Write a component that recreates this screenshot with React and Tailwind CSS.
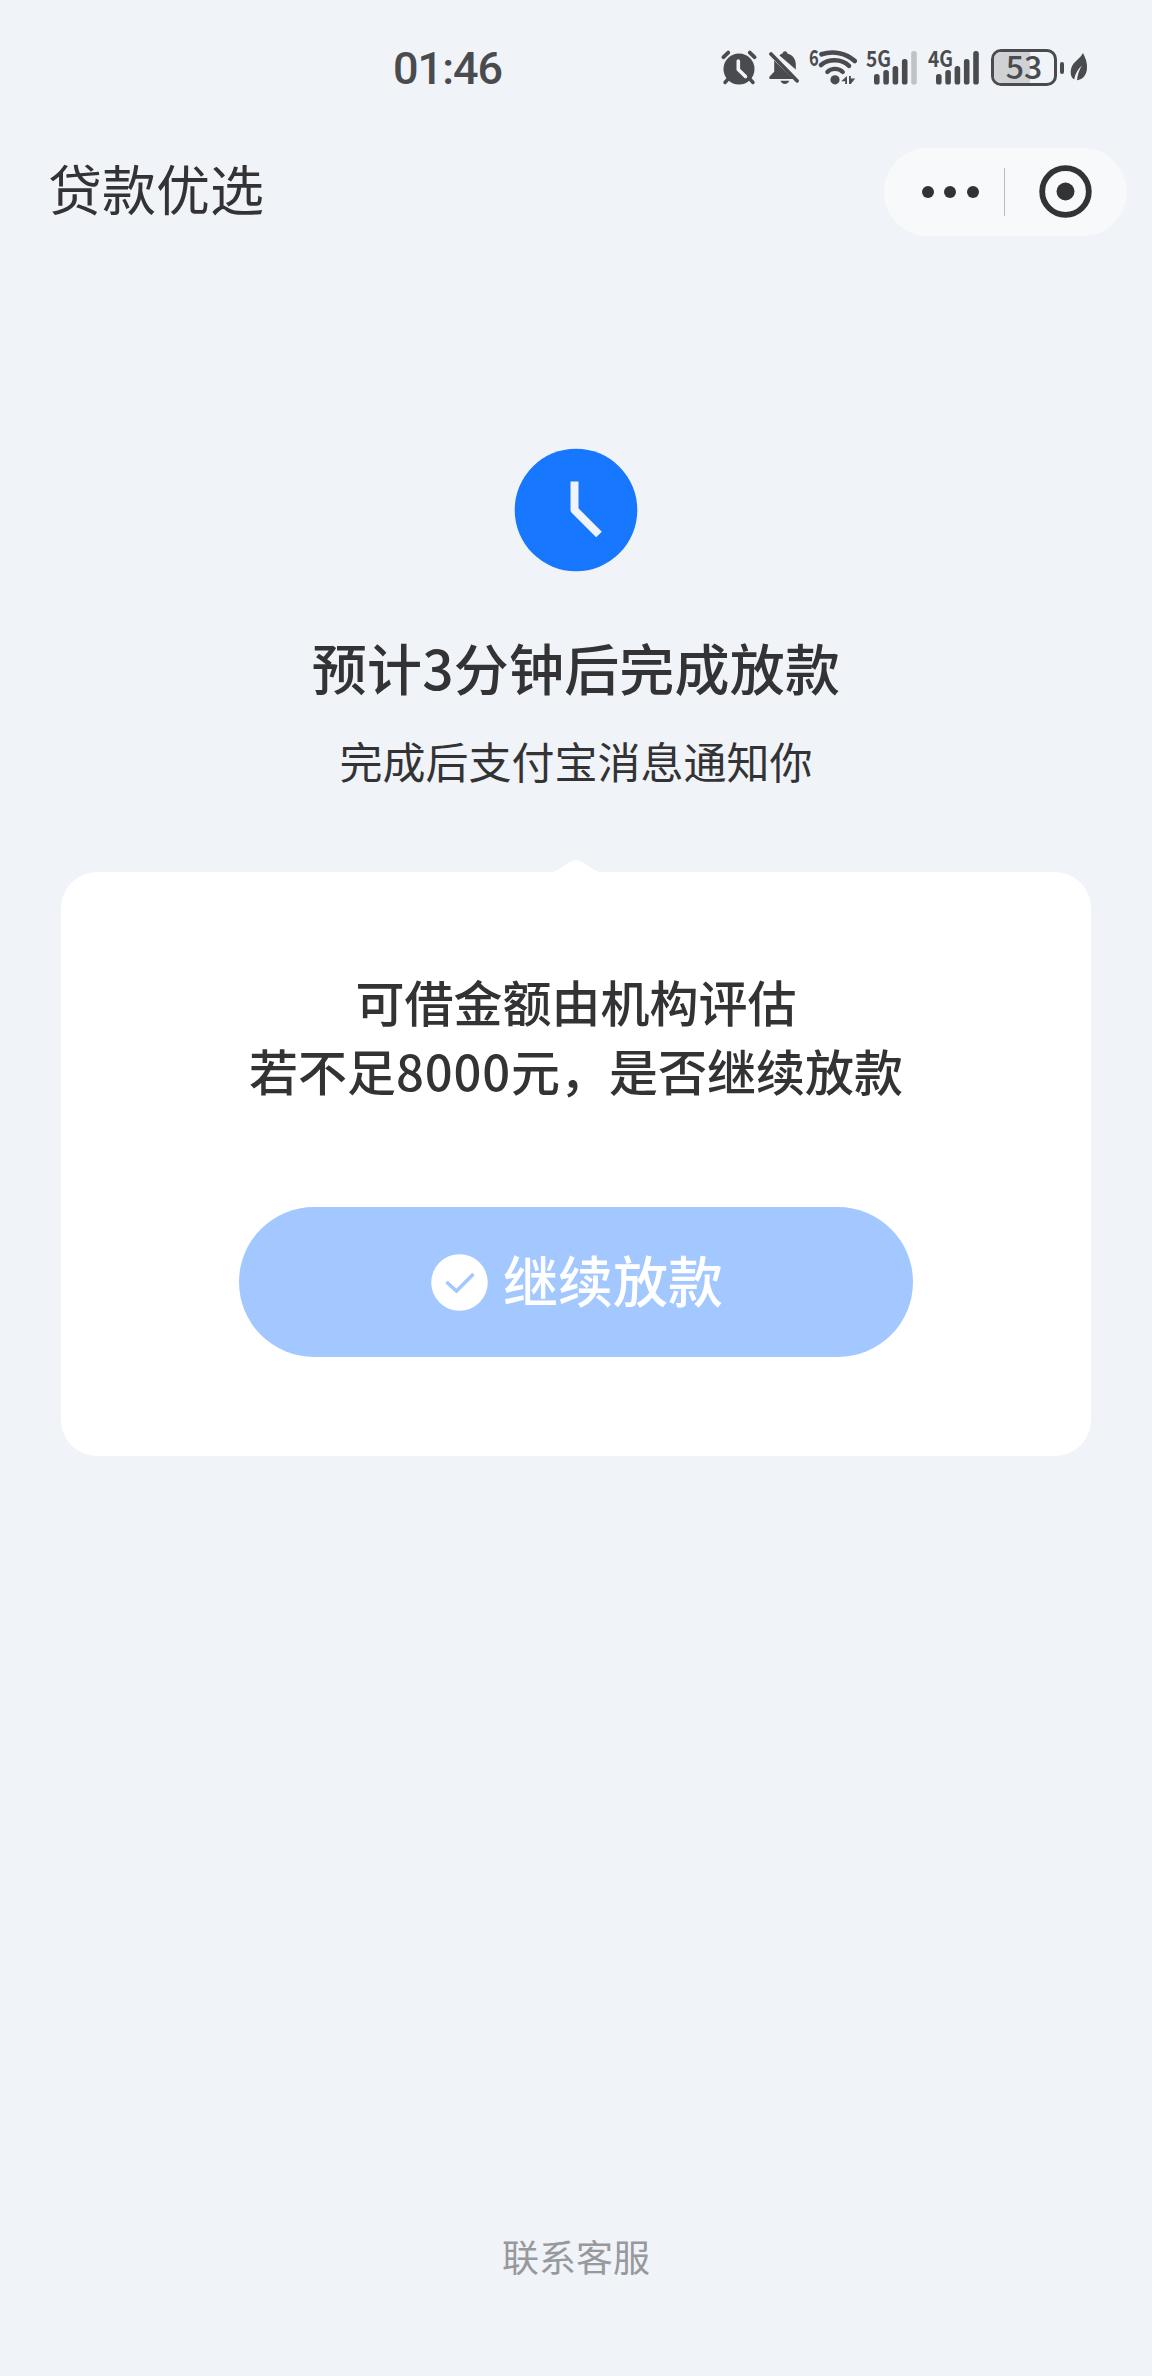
const SIGNAL_BARS = [
  { x: 0, y: 74 },
  { x: 9.3, y: 70 },
  { x: 18.6, y: 66 },
  { x: 27.9, y: 59 },
  { x: 37.2, y: 51 },
];

function AlarmIcon() {
  return (
    <svg className="w-9 h-[130px]" viewBox="721 0 36 130" fill="none" stroke="#4a4b4e" strokeLinecap="round">
      <circle cx="739" cy="69" r="15.5" fill="#4a4b4e" stroke="none" />
      <path d="M723.5 57.2 L728.2 52.6 M754.5 57.2 L749.8 52.6" strokeWidth="3.8" />
      <path d="M729 78 L725 82.5 M749 78 L753 82.5" strokeWidth="3.4" />
      <path d="M738.3 61 V69.5 L745.5 76.5" stroke="#f0f3f8" strokeWidth="3.6" strokeLinejoin="round" />
    </svg>
  );
}

function MutedBellIcon() {
  return (
    <svg className="w-[31px] h-[130px]" viewBox="769 0 31 130" fill="#4a4b4e">
      <path d="M779.5 55.4 C780.8 54.3 781.6 53.9 782.6 53.6 C783 50.4 787 50.4 787.4 53.6 C792.6 55 795.8 59 795.8 64.6 V69.5 Z" />
      <path d="M774.2 60.5 L793.4 79 H770.6 C769 79 768.8 77.2 769.8 76.2 L774.2 71.8 Z" />
      <path d="M780.5 80.8 H789.2 C788.4 84.9 781.3 84.9 780.5 80.8 Z" />
      <path d="M771 54 L797 80.8" stroke="#4a4b4e" strokeWidth="3.8" strokeLinecap="round" />
    </svg>
  );
}

function WifiIcon() {
  return (
    <div className="relative w-12 h-[130px]">
      <span className="absolute left-0 top-[42px] text-[22px] leading-[28px] font-bold origin-left scale-x-75">6</span>
      <svg className="absolute inset-0 w-12 h-[130px]" viewBox="809 0 48 130" fill="none" stroke="#4a4b4e" strokeLinecap="round">
        <path d="M821.5 54.3 C833 50.5 846 52.8 854.8 61" strokeWidth="4.6" />
        <path d="M821 65 C828.5 58.6 841.5 58.6 849 65.8" strokeWidth="4.6" />
        <path d="M827.3 72 C831.5 67.9 838.5 67.9 842.8 72" strokeWidth="4.2" />
        <circle cx="835" cy="79.8" r="4.6" fill="#4a4b4e" stroke="none" />
        <path d="M847 76 V84 H845.2 V81.2 H841.2 Z M849 76 V84 H850.8 L855.2 78.6 H850.8 V76 Z" fill="#4a4b4e" stroke="none" />
      </svg>
    </div>
  );
}

function Signal({ label, weak }) {
  return (
    <div className="relative w-[51px] h-[130px]">
      <span className="absolute left-0 top-[43px] text-[22px] leading-[28px] font-bold origin-left scale-x-[0.87]">{label}</span>
      <svg className="absolute right-0 top-0 w-[43px] h-[130px]" viewBox="0 0 43 130">
        {SIGNAL_BARS.map((b, i) => (
          <rect
            key={b.x}
            x={b.x}
            y={b.y}
            width="5.6"
            height={84.5 - b.y}
            rx="2.6"
            fill={weak && i === 4 ? '#c0c2c6' : '#4a4b4e'}
          />
        ))}
      </svg>
    </div>
  );
}

function Battery() {
  return (
    <div className="flex items-center h-[130px] pt-[5px]">
      <div className="relative w-[66px] h-[37px] rounded-[10px] border-3 border-[#4a4b4e]">
        <div className="absolute left-0 top-0 w-[36px] h-full rounded-l-[7px] bg-[#cfd1d4]" />
        <span className="absolute inset-x-0 top-[-5px] text-center text-[32px] leading-[36px] font-medium origin-center">53</span>
      </div>
      <div className="ml-[3px] w-1 h-3 rounded-full bg-[#4a4b4e]" />
    </div>
  );
}

function LeafIcon() {
  return (
    <svg className="w-[18px] h-[130px]" viewBox="1070 0 18 130">
      <path d="M1083 53 C1085.5 58 1087.5 63 1087 68.5 C1086.5 75 1083 79.5 1077 80.2 C1077.6 74.5 1079 70.5 1082 65.5 C1077.5 69.5 1075.2 74 1074.2 79.5 C1070.5 77.5 1070 72 1071.5 67.5 C1073.5 61.5 1079.5 59.5 1083 53 Z" fill="#4a4b4e" />
    </svg>
  );
}

function StatusBar() {
  return (
    <div className="flex h-[130px] text-[#4a4b4e]">
      <div className="ml-[393px] w-[328px] pt-[4px] text-[45px] leading-[130px] tracking-[-1px] font-medium font-['Roboto',sans-serif]">01:46</div>
      <AlarmIcon />
      <div className="w-3" />
      <MutedBellIcon />
      <div className="w-[9px]" />
      <WifiIcon />
      <div className="w-[9px]" />
      <Signal label="5G" weak />
      <div className="w-[11px]" />
      <Signal label="4G" />
      <div className="w-[12px]" />
      <Battery />
      <div className="w-[6px]" />
      <LeafIcon />
    </div>
  );
}

function NavBar() {
  return (
    <div className="flex items-center justify-between h-[124px] pl-[48px] pr-[25px]">
      <h1 className="text-[54px] leading-[54px] pb-2 text-[#333335]">贷款优选</h1>
      <div className="flex items-center w-[243px] h-[88px] rounded-full bg-[#f8f9fb]">
        <div className="flex gap-[10.4px] ml-[38px]">
          <div className="size-3 rounded-full bg-[#333335]" />
          <div className="size-3 rounded-full bg-[#333335]" />
          <div className="size-3 rounded-full bg-[#333335]" />
        </div>
        <div className="ml-[25px] w-px h-12 bg-[#bbbcbe]" />
        <svg className="ml-[34px] mb-[1px] size-[53px]" viewBox="0 0 53 53">
          <circle cx="26.5" cy="26.5" r="23.3" fill="none" stroke="#333335" strokeWidth="5.8" />
          <circle cx="26.5" cy="26.5" r="9" fill="#333335" />
        </svg>
      </div>
    </div>
  );
}

export default function App() {
  return (
    <div className="flex flex-col w-[1152px] h-[2376px] bg-[#f0f3f8] text-[#333335] font-['Noto_Sans_CJK_SC',sans-serif]">
      <StatusBar />
      <NavBar />

      {/* Progress */}
      <div className="flex flex-col items-center pt-[194px]">
        <svg className="size-[124px]" viewBox="0 0 124 124">
          <circle cx="62" cy="62" r="61.3" fill="#1777ff" />
          <path d="M60.5 33.5 V62 L85 86.5" fill="none" stroke="#f0f3f8" strokeWidth="8" strokeLinejoin="round" />
        </svg>
        <h2 className="mt-[54px] text-[55px] leading-20 tracking-[0.2px] font-medium">预计3分钟后完成放款</h2>
        <p className="mt-6 text-[43px] leading-15">完成后支付宝消息通知你</p>
      </div>

      {/* Confirm card */}
      <div className="relative mt-[82px] mx-[61px] h-[584px] rounded-[36px] bg-white flex flex-col items-center pt-[94px]">
        <svg className="absolute -top-3 left-1/2 -translate-x-1/2 w-12 h-[13px]" viewBox="0 0 48 13">
          <path d="M0 13 V12 C3 11.5 5 10 8 8 L18 2 Q24 -1.8 30 2 L40 8 C43 10 45 11.5 48 12 V13 Z" fill="#fff" />
        </svg>
        <p className="text-[49px] leading-[69px] font-medium text-center">
          可借金额由机构评估
          <br />
          若不足<span className="tracking-[0.8px]">8000</span>元，是否继续放款
        </p>
        <button className="mt-[103px] w-[674px] h-[150px] rounded-full bg-[#a2c8ff] text-white flex items-center justify-center">
          <svg className="ml-[2px] size-[57px]" viewBox="0 0 57 57">
            <circle cx="28.5" cy="28.5" r="28.3" fill="#fff" />
            <path d="M15.5 28 L25.5 37 L42.5 20" fill="none" stroke="#a2c8ff" strokeWidth="3.6" />
          </svg>
          <span className="ml-[15px] text-[55px] leading-[55px] pb-2 font-medium">继续放款</span>
        </button>
      </div>

      <a className="mt-auto mb-[90px] text-center text-[37px] leading-15 text-[#97999d]">联系客服</a>
    </div>
  );
}
